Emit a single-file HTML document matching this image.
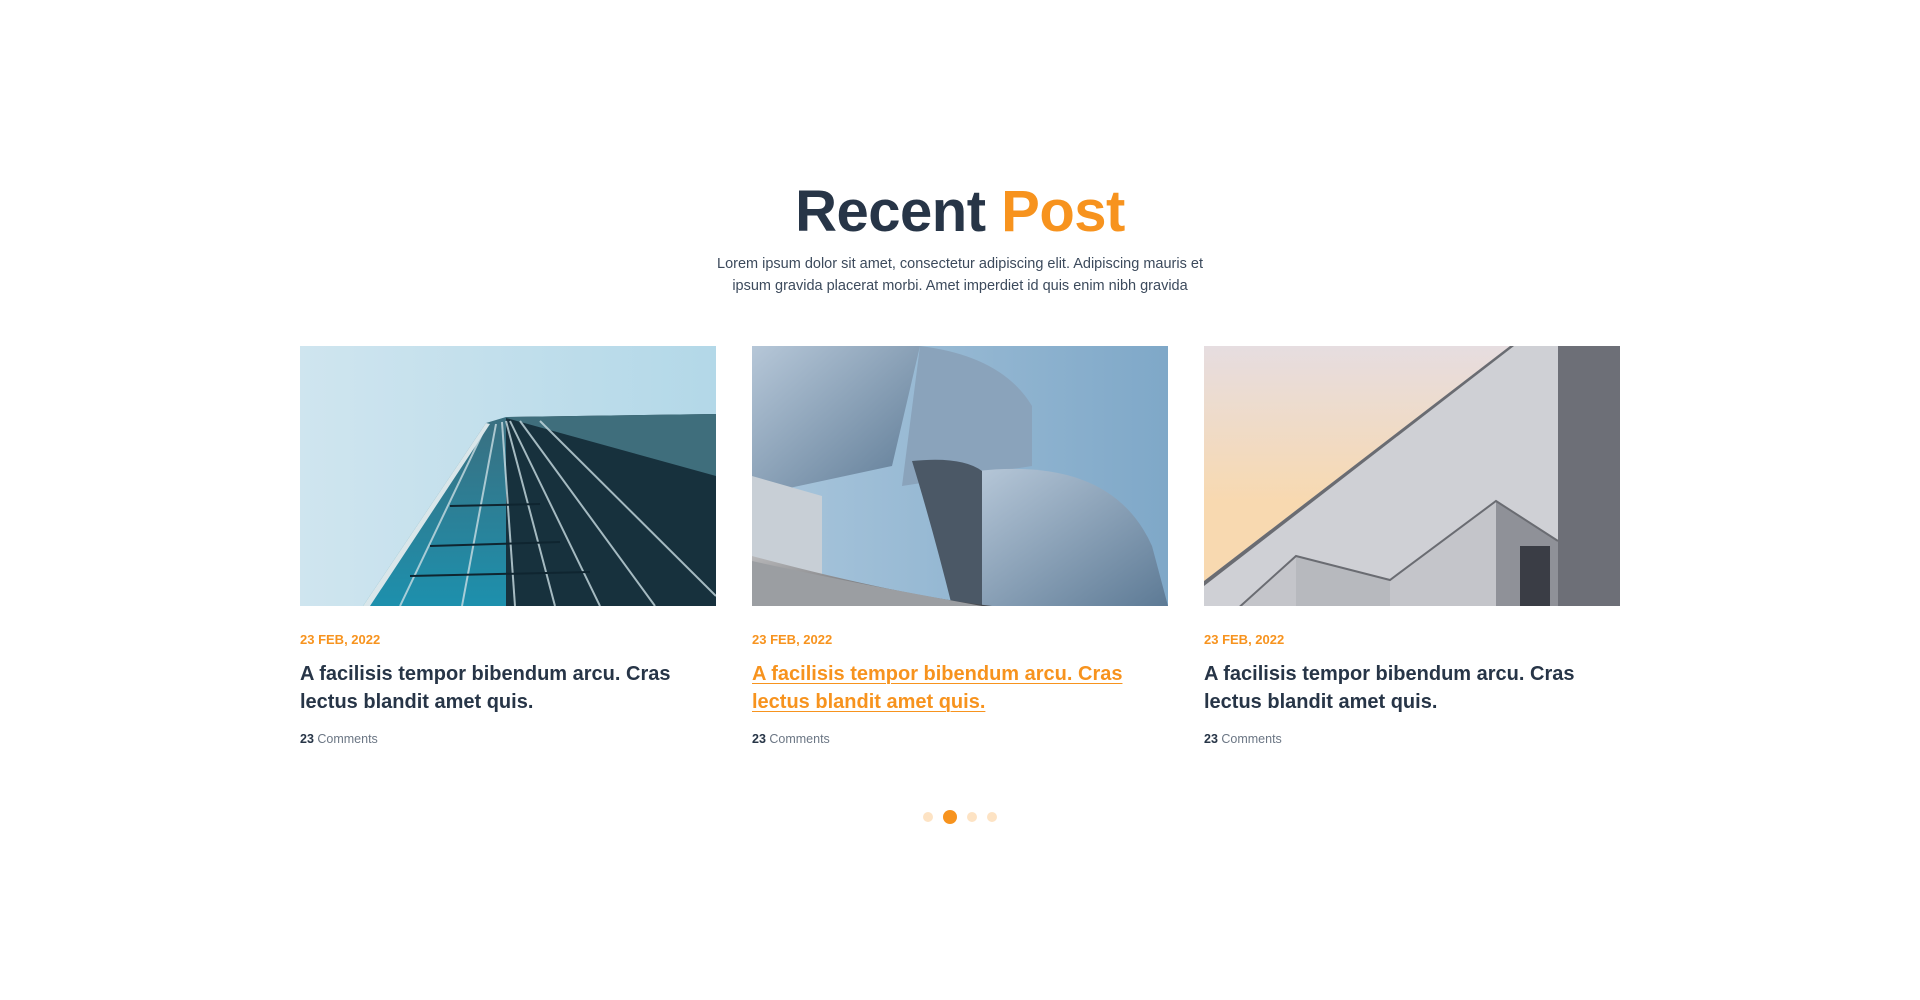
<!DOCTYPE html>
<html><head><meta charset="utf-8"><style>
*{margin:0;padding:0;box-sizing:border-box}
body{width:1920px;height:1000px;background:#fff;font-family:"Liberation Sans",sans-serif;color:#273547;position:relative;overflow:hidden}
h1{position:absolute;top:177px;left:0;width:1920px;text-align:center;font-size:58px;font-weight:bold;letter-spacing:-0.5px;line-height:70px}
h1 span{color:#f7931e}
.sub{position:absolute;top:253px;left:700px;width:520px;text-align:center;font-size:14.5px;line-height:22px;color:#3c4a5c}
.card{position:absolute;top:346px;width:416px}
.card svg{display:block;width:416px;height:260px}
.date{margin-top:26px;font-size:13px;font-weight:bold;color:#f7931e;line-height:16px}
.t{margin-top:12px;font-size:20px;font-weight:bold;line-height:28px;color:#273547}
.t.hl{color:#f7931e;text-decoration:underline;text-decoration-thickness:1px;text-underline-offset:3px}
.c{margin-top:16px;font-size:12.5px;color:#6b7684}
.c b{color:#273547}
.dot{position:absolute;border-radius:50%;background:#fde3c4}
</style></head><body>
<h1>Recent <span>Post</span></h1>
<div class="sub">Lorem ipsum dolor sit amet, consectetur adipiscing elit. Adipiscing mauris et ipsum gravida placerat morbi. Amet imperdiet id quis enim nibh gravida</div>

<div class="card" style="left:300px">
<svg viewBox="0 0 416 260"><defs><linearGradient id="s1" x1="0" x2="1"><stop offset="0" stop-color="#cfe5ef"/><stop offset="1" stop-color="#b3d8e8"/></linearGradient>
<linearGradient id="b1" x1="0" y1="0" x2="0" y2="1"><stop offset="0" stop-color="#3a6f80"/><stop offset="1" stop-color="#1d90ad"/></linearGradient></defs>
<rect width="416" height="260" fill="url(#s1)"/>
<polygon points="63,260 186,77 206,71 206,260" fill="url(#b1)"/>
<polygon points="206,71 416,68 416,260 206,260" fill="#17313d"/>
<polygon points="206,71 416,68 416,130 206,72" fill="#3f6e7c"/>
<g stroke="#c9dde3" stroke-width="2" opacity=".8"><line x1="186" y1="80" x2="100" y2="260"/><line x1="196" y1="78" x2="162" y2="260"/><line x1="202" y1="76" x2="215" y2="260"/><line x1="206" y1="75" x2="255" y2="260"/>
<line x1="210" y1="75" x2="300" y2="260"/><line x1="220" y1="75" x2="355" y2="260"/><line x1="240" y1="75" x2="416" y2="250"/></g>
<g stroke="#0f2530" stroke-width="2"><line x1="130" y1="200" x2="260" y2="196"/><line x1="110" y1="230" x2="290" y2="226"/><line x1="150" y1="160" x2="240" y2="158"/></g>
<polygon points="63,260 186,77 190,78 70,260" fill="#d9e6ea"/>
</svg>
<div class="date">23 FEB, 2022</div>
<div class="t">A facilisis tempor bibendum arcu. Cras lectus blandit amet quis.</div>
<div class="c"><b>23</b> Comments</div>
</div>

<div class="card" style="left:752px">
<svg viewBox="0 0 416 260"><defs><linearGradient id="s2" x1="0" x2="1"><stop offset="0" stop-color="#a9c6dc"/><stop offset="1" stop-color="#7fa8c8"/></linearGradient>
<linearGradient id="m2" x1="0" y1="0" x2="1" y2="1"><stop offset="0" stop-color="#b6c7d8"/><stop offset="1" stop-color="#5d7a95"/></linearGradient>
<linearGradient id="g2" x1="0" y1="0" x2="1" y2="1"><stop offset="0" stop-color="#b8b8ba"/><stop offset="1" stop-color="#3a3d42"/></linearGradient></defs>
<rect width="416" height="260" fill="url(#s2)"/>
<path d="M0,0 H168 L140,120 L0,150Z" fill="url(#m2)"/>
<path d="M168,0 Q250,10 280,60 L280,120 L150,140Z" fill="#8aa3bb"/>
<path d="M225,125 Q360,110 400,200 L416,260 H230Z" fill="url(#m2)"/>
<path d="M160,115 Q210,110 230,125 L230,260 H200 Q180,180 160,115Z" fill="#4b5866"/>
<path d="M0,130 L70,150 L70,230 L0,250Z" fill="#c8cfd6"/>
<path d="M0,270 L0,210 Q150,250 240,260Z" fill="url(#g2)"/>
<path d="M0,260 L0,215 Q90,235 230,260Z" fill="#9b9ea2"/>
</svg>
<div class="date">23 FEB, 2022</div>
<div class="t hl">A facilisis tempor bibendum arcu. Cras lectus blandit amet quis.</div>
<div class="c"><b>23</b> Comments</div>
</div>

<div class="card" style="left:1204px">
<svg viewBox="0 0 416 260"><defs><linearGradient id="s3" x1="0" y1="0" x2="0" y2="1"><stop offset="0" stop-color="#e6dde0"/><stop offset=".6" stop-color="#f8d9b0"/></linearGradient></defs>
<rect width="416" height="260" fill="url(#s3)"/>
<polygon points="0,235 306,0 354,0 354,260 0,260" fill="#cfd0d5"/>
<polygon points="0,235 306,0 310,0 0,240" fill="#6a6c72"/>
<polygon points="0,293 92,210 186,234 292,155 354,195 354,260 0,260" fill="#c4c5ca"/>
<polygon points="92,210 186,234 186,260 92,260" fill="#b7b9be"/>
<polygon points="292,155 354,195 354,260 292,260" fill="#8f9198"/>
<rect x="354" y="0" width="62" height="260" fill="#6d6f77"/>
<rect x="316" y="200" width="30" height="60" fill="#3a3d45"/>
<polyline points="0,293 92,210 186,234 292,155 354,195" fill="none" stroke="#6a6c72" stroke-width="2"/>
</svg>
<div class="date">23 FEB, 2022</div>
<div class="t">A facilisis tempor bibendum arcu. Cras lectus blandit amet quis.</div>
<div class="c"><b>23</b> Comments</div>
</div>

<div class="dot" style="left:923px;top:812px;width:10px;height:10px"></div>
<div class="dot" style="left:943px;top:810px;width:14px;height:14px;background:#f7931e"></div>
<div class="dot" style="left:967px;top:812px;width:10px;height:10px"></div>
<div class="dot" style="left:987px;top:812px;width:10px;height:10px"></div>
</body></html>
